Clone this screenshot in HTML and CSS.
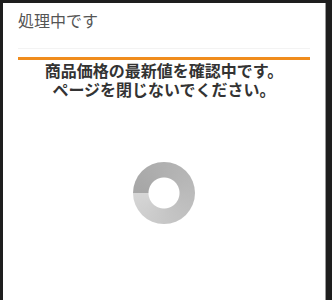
FILE: index.html
```html
<!DOCTYPE html>
<html lang="ja">
<head>
<meta charset="utf-8">
<link rel="stylesheet" href="styles.css">
</head>
<body>
<div class="dialog">
  <div class="title">処理中です</div>
  <div class="divider"></div>
  <div class="bar"></div>
  <div class="message">
    <p class="line">商品価格の最新値を確認中です。</p>
    <p class="line">ページを閉じないでください。</p>
  </div>
  <div class="spinner"></div>
</div>
</body>
</html>
```
FILE: styles.css
```css
html, body {
  margin: 0;
  padding: 0;
}
body {
  background: #1e1e1e;
  width: 332px;
  height: 300px;
  overflow: hidden;
}
.dialog {
  margin: 3px 0 0 3px;
  width: 322px;
  height: 297px;
  background: #fff;
  border-right: 1px solid #9a9a9a;
  display: flex;
  flex-direction: column;
  align-items: stretch;
  font-family: "Noto Sans CJK JP", "Noto Sans", sans-serif;
}
.title {
  margin: 7px 15px 0 15px;
  font-size: 16px;
  line-height: 20px;
  color: #555;
}
.divider {
  margin: 18px 15px 0 15px;
  height: 1px;
  background: #f3f3f3;
}
.bar {
  margin: 8px 15px 0 15px;
  height: 3px;
  background: #f08c1c;
}
.message {
  margin-top: 1px;
  text-align: center;
  font-size: 16px;
  font-weight: bold;
  color: #333;
}
.line {
  margin: 0;
  line-height: 19px;
}
.spinner {
  align-self: center;
  margin-top: 63px;
  margin-left: -1px;
  width: 62px;
  height: 62px;
  border-radius: 50%;
  background:
    radial-gradient(circle, #fff 15px, rgba(255,255,255,0) 16px),
    conic-gradient(from 270deg, #a6a6a6, #b6b6b6 40%, #c4c4c4 70%, #d6d6d6);
}
```
